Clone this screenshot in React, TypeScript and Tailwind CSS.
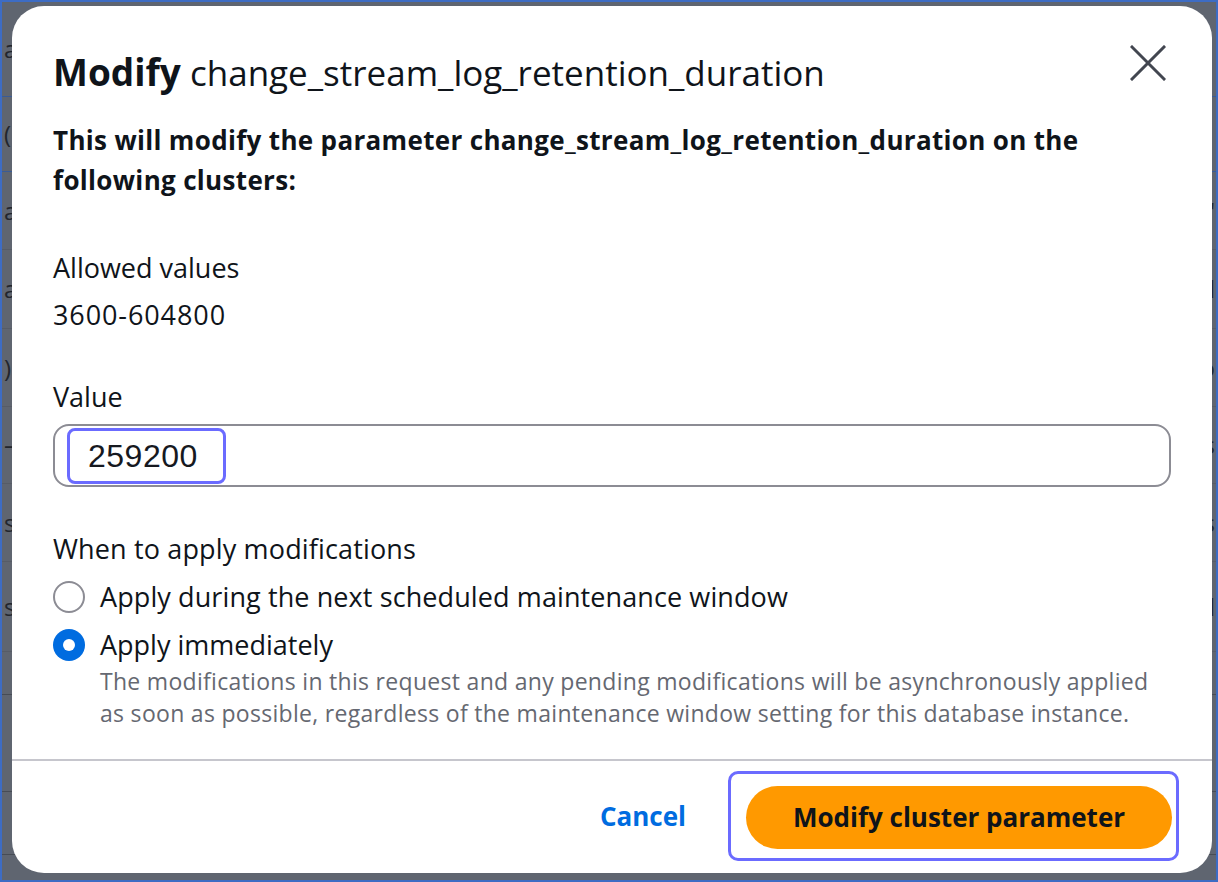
const rows = [
  { h: 95, left: "a", right: "", line: "border-[#3a5b96]" },
  { h: 75, left: "(", right: "", line: "border-[#3a5b96]" },
  { h: 78, left: "a", right: "'", line: "border-[#575c66]" },
  { h: 79, left: "a", right: "l", line: "border-[#575c66]" },
  { h: 78, left: ").", right: "o", line: "border-[#575c66]" },
  { h: 77, left: "–", right: "s", line: "border-[#575c66]" },
  { h: 78, left: "sa", right: "s", line: "border-[#575c66]" },
  { h: 90, left: "sa", right: "l", line: "border-[#575c66]" },
  { h: 43, left: "", right: "", line: "border-[#474c55]" },
  { h: 97, left: "", right: "", line: "border-[#474c55]" },
  { h: 63, left: "", right: "", line: "border-[#474c55]" },
]

function Backdrop() {
  return (
    <div className="flex flex-col text-[24px] text-[#22262d]">
      {rows.map((r, i) => (
        <div
          key={i}
          style={{ height: r.h }}
          className={`flex items-center justify-between border-b ${r.line}`}
        >
          <span className="pl-[2px]">{r.left}</span>
          <span className="pr-[1px]">{r.right}</span>
        </div>
      ))}
    </div>
  )
}

function Radio({ checked }: { checked?: boolean }) {
  if (checked) {
    return (
      <span className="flex h-[32px] w-[32px] shrink-0 items-center justify-center rounded-full bg-[#006ce0]">
        <span className="h-[12px] w-[12px] rounded-full bg-white" />
      </span>
    )
  }
  return <span className="h-[32px] w-[32px] shrink-0 rounded-full border-2 border-[#8c8c94] bg-white" />
}

function CloseIcon() {
  return (
    <svg width="36" height="36" viewBox="0 0 36 36" className="mt-[-3px] text-[#424650]">
      <path d="M2 2L34 34M34 2L2 34" stroke="currentColor" strokeWidth="3" strokeLinecap="square" />
    </svg>
  )
}

export default function App() {
  return (
    <div className="relative h-[882px] w-[1218px] overflow-hidden border-2 border-[#3d6cc4] bg-[#5f6570] font-['Open_Sans',sans-serif]">
      <Backdrop />

      <div className="absolute left-[10px] top-[4px] flex w-[1200px] flex-col rounded-[32px] bg-white pt-[42px] pb-[12px] text-[#0f141a]">
        <div className="flex h-[48px] items-start justify-between pl-[41px] pr-[46px]">
          <h1 className="text-[35px] leading-[48px]">
            <span className="text-[37px] font-bold">Modify</span> change_stream_log_retention_duration
          </h1>
          <CloseIcon />
        </div>

        <div className="px-[41px]">
          <p className="mt-[24px] w-[1090px] text-[26px] font-bold leading-[40px] tracking-[0.33px]">
            This will modify the parameter change_stream_log_retention_duration on the following clusters:
          </p>

          <div className="mt-[48px] text-[27px] leading-[40px]">Allowed values</div>
          <div className="mt-[7px] text-[27px] leading-[40px] tracking-[0.9px]">3600-604800</div>

          <div className="mt-[42px] text-[27px] leading-[40px]">Value</div>
          <div className="mt-[7px] flex h-[63px] items-start rounded-[16px] border-2 border-[#8c8c94] pl-[12px] pt-[2px]">
            <div className="flex h-[56px] items-center rounded-[8px] border-[3px] border-[#6b6bff] pl-[18px] pr-[25px] font-['Liberation_Sans',sans-serif] text-[32px] tracking-[0.5px] text-[#16191f]">
              259200
            </div>
          </div>

          <div className="mt-[42px] text-[27px] leading-[40px] tracking-[0.15px]">When to apply modifications</div>
          <label className="mt-[8px] flex h-[40px] items-center gap-[15px] text-[27px]">
            <Radio />
            <span className="tracking-[0.1px]">Apply during the next scheduled maintenance window</span>
          </label>
          <label className="mt-[8px] flex h-[40px] items-center gap-[15px] text-[27px]">
            <Radio checked />
            <span>Apply immediately</span>
          </label>
          <p className="pl-[47px] text-[23px] leading-[32px] tracking-[0.3px] text-[#656871]">
            The modifications in this request and any pending modifications will be asynchronously applied as soon as
            possible, regardless of the maintenance window setting for this database instance.
          </p>
        </div>

        <div className="mt-[30px] h-[2px] bg-[#c6c6cd]" />

        <div className="mt-[10px] flex items-center justify-end gap-[42px] pr-[33px]">
          <button className="text-[26px] font-bold text-[#006ce0]">Cancel</button>
          <div className="rounded-[10px] border-[3px] border-[#6b6bff] pb-[9px] pl-[15px] pr-[4px] pt-[12px]">
            <button className="h-[63px] w-[426px] rounded-full bg-[#ff9900] text-[26px] font-bold text-[#0f141a]">
              Modify cluster parameter
            </button>
          </div>
        </div>
      </div>
    </div>
  )
}
